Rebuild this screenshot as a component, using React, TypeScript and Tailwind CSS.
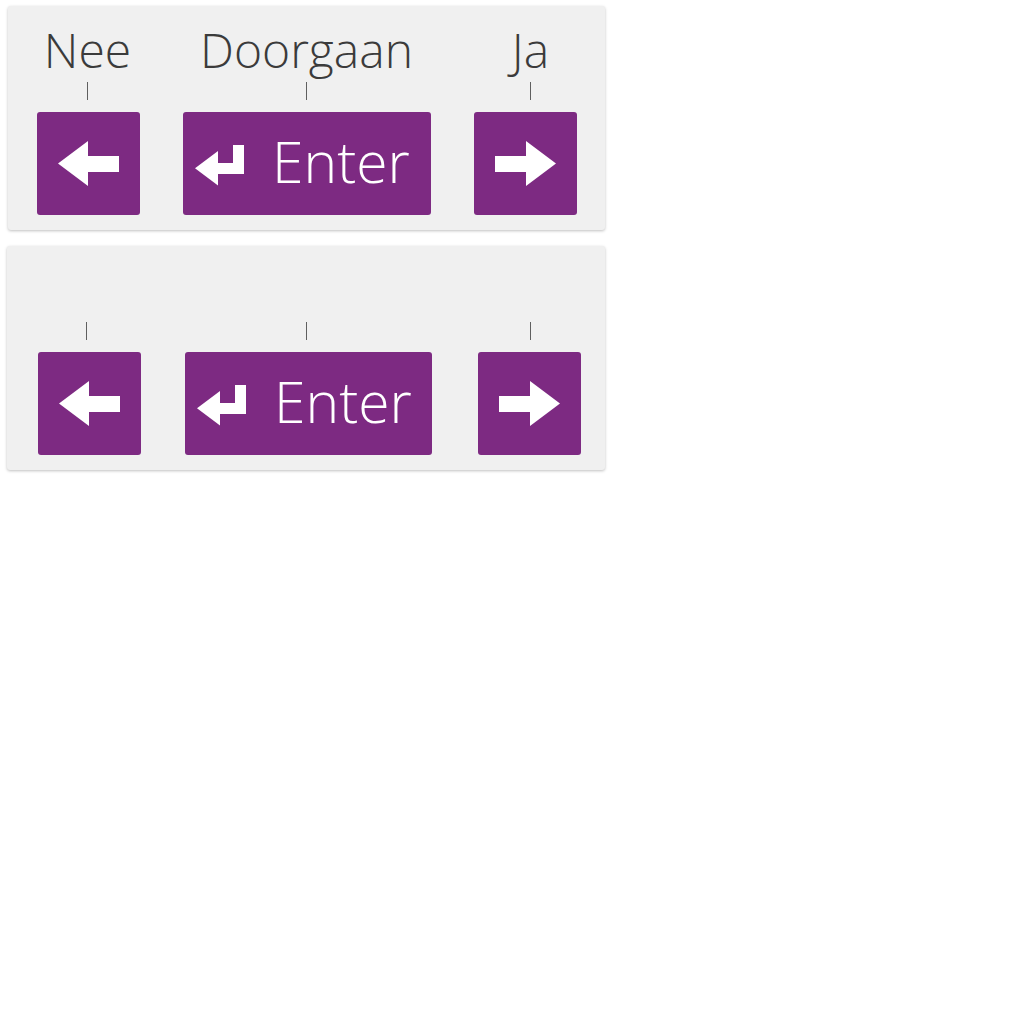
import React from "react";

const KEY = "bg-[#7d2a82] rounded-[3px] h-[103px] shrink-0";

function LeftArrow() {
  return (
    <svg width="103" height="103" viewBox="0 0 103 103">
      <polygon fill="#fff" points="21,51.5 51,29 51,44 82,44 82,60 51,60 51,74" />
    </svg>
  );
}

function RightArrow() {
  return (
    <svg width="103" height="103" viewBox="0 0 103 103">
      <polygon fill="#fff" points="82,51.5 52,29 52,44 21,44 21,60 52,60 52,74" />
    </svg>
  );
}

function EnterIcon() {
  return (
    <svg width="50" height="41" viewBox="0 0 50 41" className="mt-[33px] shrink-0">
      <polygon fill="#fff" points="0,23.3 23,6 23,18 38,18 38,0 49,0 49,29 23,29 23,40.5" />
    </svg>
  );
}

function EnterKey({ w }: { w: string }) {
  return (
    <div className={`${KEY} ${w} flex items-start pl-[12px]`}>
      <EnterIcon />
      <span className="ml-[27px] mt-[21px] text-[57px] leading-[56px] font-light text-white">
        Enter
      </span>
    </div>
  );
}

function Tick() {
  return <div className="w-px h-[18px] bg-[#5f5f5f]" />;
}

function LabelCell({ w, label, extra }: { w: string; label?: string; extra?: string }) {
  return (
    <div className={`${w} ${extra ?? ""} flex flex-col items-center shrink-0`}>
      <div className="h-[76px] pt-[20px] text-[48px] leading-[48px] font-light text-[#3b3b3b] whitespace-nowrap">
        {label ?? "\u00a0"}
      </div>
      <Tick />
    </div>
  );
}

export default function App() {
  return (
    <div
      className="w-[1024px] h-[1024px] bg-white pt-[6px] pl-[7px] flex flex-col gap-[16px]"
      style={{ fontFamily: '"Open Sans", "Noto Sans", sans-serif' }}
    >
      {/* Panel 1 */}
      <div className="ml-[1px] w-[597px] h-[224px] bg-[#f0f0f0] rounded-[3px] shadow-[0_1px_3px_rgba(0,0,0,0.25)] flex flex-col">
        <div className="flex pl-[29px]">
          <LabelCell w="w-[101px]" label="Nee" />
          <LabelCell w="w-[249px]" label="Doorgaan" extra="ml-[44px]" />
          <LabelCell w="w-[103px]" label="Ja" extra="ml-[48px]" />
        </div>
        <div className="flex pl-[29px] mt-[12px]">
          <div className={`${KEY} w-[103px]`}>
            <LeftArrow />
          </div>
          <div className="ml-[43px]">
            <EnterKey w="w-[248px]" />
          </div>
          <div className={`${KEY} w-[103px] ml-[43px]`}>
            <RightArrow />
          </div>
        </div>
      </div>

      {/* Panel 2 */}
      <div className="w-[598px] h-[224px] bg-[#f0f0f0] rounded-[3px] shadow-[0_1px_3px_rgba(0,0,0,0.25)] flex flex-col">
        <div className="flex pl-[29px]">
          <LabelCell w="w-[101px]" />
          <LabelCell w="w-[249px]" extra="ml-[45px]" />
          <LabelCell w="w-[103px]" extra="ml-[48px]" />
        </div>
        <div className="flex pl-[31px] mt-[12px]">
          <div className={`${KEY} w-[103px]`}>
            <LeftArrow />
          </div>
          <div className="ml-[44px]">
            <EnterKey w="w-[247px]" />
          </div>
          <div className={`${KEY} w-[103px] ml-[46px]`}>
            <RightArrow />
          </div>
        </div>
      </div>
    </div>
  );
}
